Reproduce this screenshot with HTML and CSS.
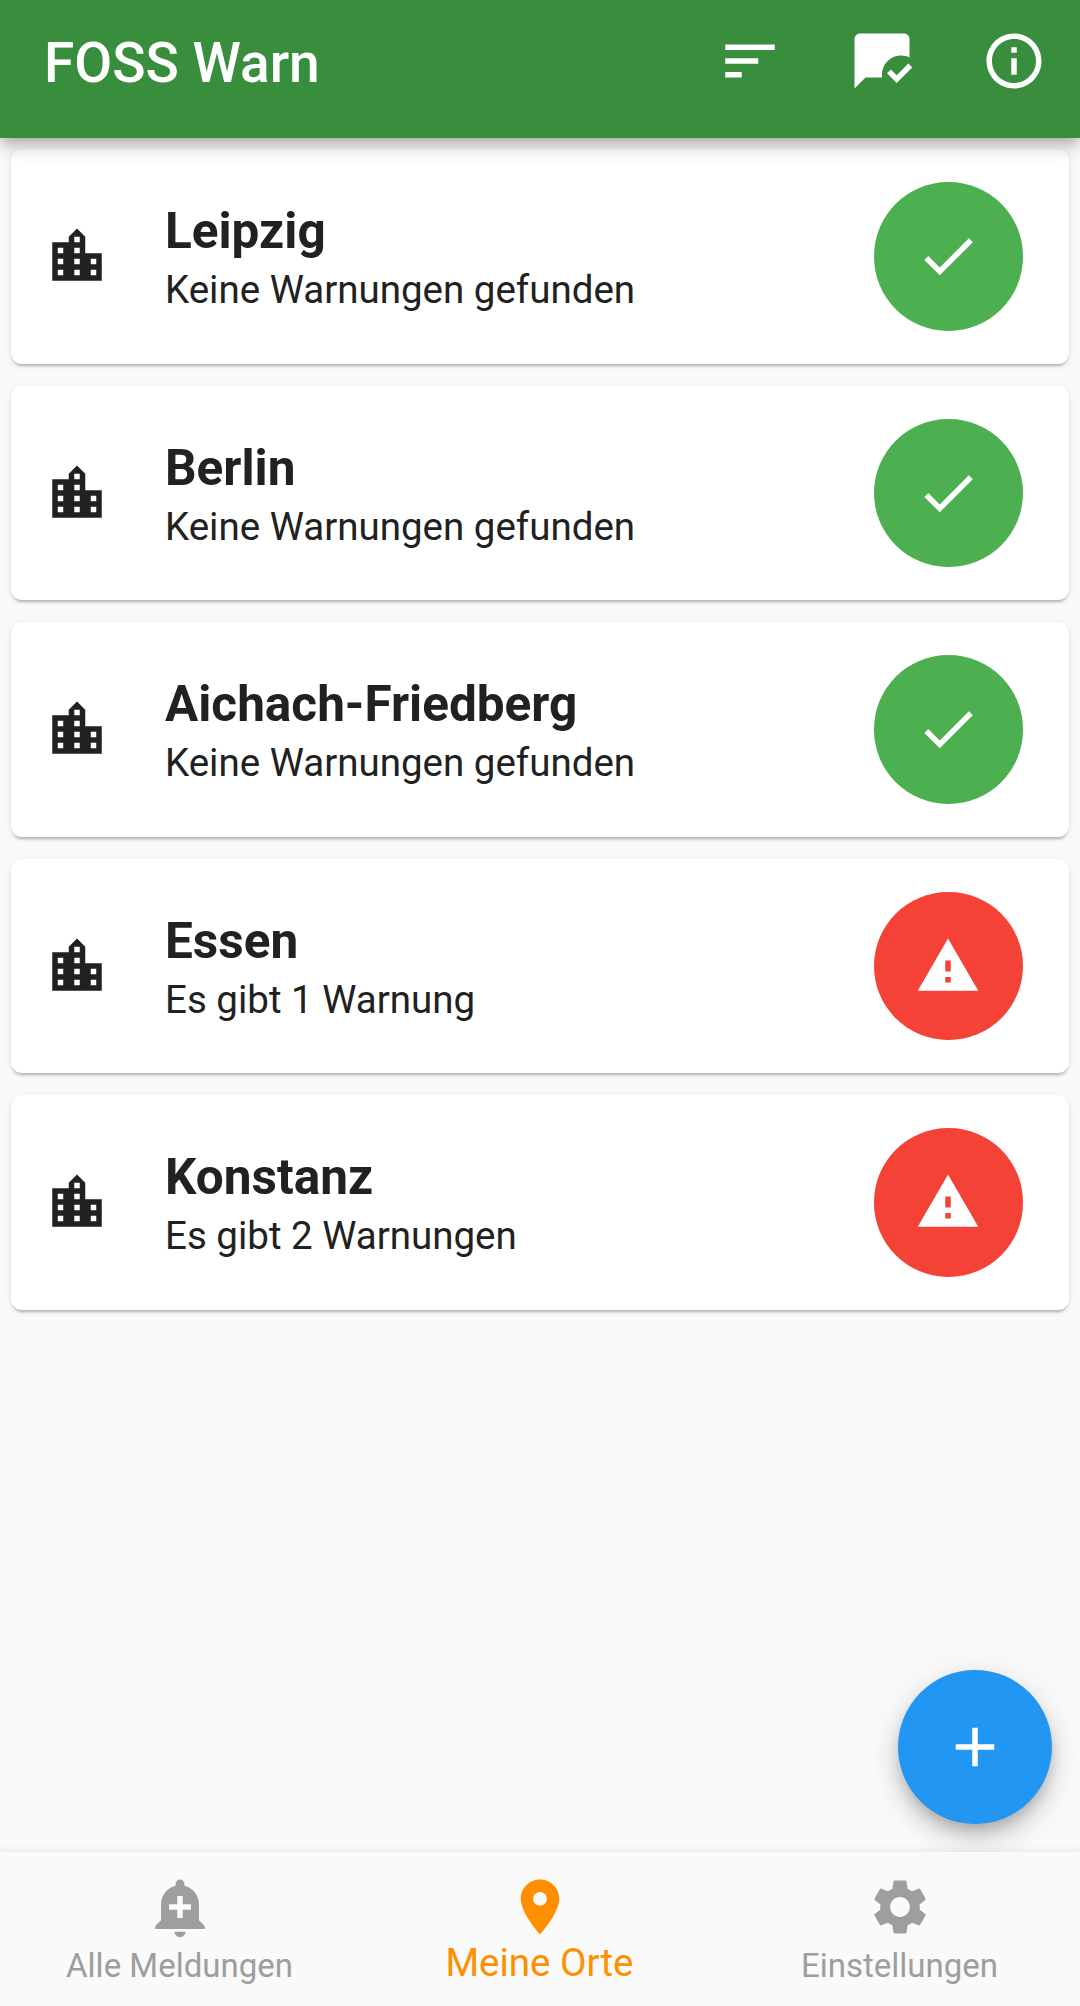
FILE: index.html
```
<!DOCTYPE html>
<html lang="de">
<head>
<meta charset="utf-8">
<title>FOSS Warn</title>
<link rel="stylesheet" href="styles.css">
</head>
<body>
<svg class="sprite" aria-hidden="true">
  <symbol id="city" viewBox="0 0 24 24"><path d="M15 11V5l-3-3-3 3v2H3v14h18V11h-6zm-8 8H5v-2h2v2zm0-4H5v-2h2v2zm0-4H5V9h2v2zm6 8h-2v-2h2v2zm0-4h-2v-2h2v2zm0-4h-2V9h2v2zm0-4h-2V5h2v2zm6 12h-2v-2h2v2zm0-4h-2v-2h2v2z"/></symbol>
  <symbol id="check" viewBox="0 0 24 24"><path d="M9 16.17 4.83 12l-1.42 1.41L9 19 21 7l-1.41-1.41z"/></symbol>
  <symbol id="warning" viewBox="0 0 24 24"><path d="M1 21h22L12 2 1 21zm12-3h-2v-2h2v2zm0-4h-2v-4h2v4z"/></symbol>
</svg>
<div class="app">
  <header class="app-bar">
    <h1 class="app-title">FOSS Warn</h1>
    <button class="action" aria-label="Sortieren"><svg class="icon" viewBox="0 0 24 24"><path d="M3 18h6v-2H3v2zM3 6v2h18V6H3zm0 7h12v-2H3v2z"/></svg></button>
    <button class="action" aria-label="Als gelesen markieren"><svg class="icon" viewBox="0 0 24 24"><path d="M12 18H6l-4 4V4c0-1.1.9-2 2-2h16c1.1 0 2 .9 2 2v6.68c-.91-.43-1.92-.68-3-.68-3.87 0-7 3.13-7 7v1zm11-3.66-1.41-1.41-4.24 4.24-2.12-2.12-1.41 1.41L17.34 20 23 14.34z"/></svg></button>
    <button class="action" aria-label="Info"><svg class="icon" viewBox="0 0 24 24"><path d="M11 7h2v2h-2zm0 4h2v6h-2zm1-9C6.48 2 2 6.48 2 12s4.48 10 10 10 10-4.48 10-10S17.52 2 12 2zm0 18c-4.41 0-8-3.59-8-8s3.59-8 8-8 8 3.59 8 8-3.59 8-8 8z"/></svg></button>
  </header>
  <main class="places">
    <article class="card"><svg class="icon"><use href="#city"/></svg><div class="info"><h2 class="name">Leipzig</h2><p class="status">Keine Warnungen gefunden</p></div><span class="badge"><svg class="icon"><use href="#check"/></svg></span></article>
    <article class="card"><svg class="icon"><use href="#city"/></svg><div class="info"><h2 class="name">Berlin</h2><p class="status">Keine Warnungen gefunden</p></div><span class="badge"><svg class="icon"><use href="#check"/></svg></span></article>
    <article class="card"><svg class="icon"><use href="#city"/></svg><div class="info"><h2 class="name">Aichach-Friedberg</h2><p class="status">Keine Warnungen gefunden</p></div><span class="badge"><svg class="icon"><use href="#check"/></svg></span></article>
    <article class="card"><svg class="icon"><use href="#city"/></svg><div class="info"><h2 class="name">Essen</h2><p class="status">Es gibt 1 Warnung</p></div><span class="badge alert"><svg class="icon"><use href="#warning"/></svg></span></article>
    <article class="card"><svg class="icon"><use href="#city"/></svg><div class="info"><h2 class="name">Konstanz</h2><p class="status">Es gibt 2 Warnungen</p></div><span class="badge alert"><svg class="icon"><use href="#warning"/></svg></span></article>
    <button class="fab" aria-label="Ort hinzufügen"><svg class="icon" viewBox="0 0 24 24"><path d="M19 13h-6v6h-2v-6H5v-2h6V5h2v6h6v2z"/></svg></button>
  </main>
  <nav class="bottom-nav">
    <a class="tab"><svg class="icon" viewBox="0 0 24 24"><path d="M10.01 21.01c0 1.1.89 1.99 1.99 1.99s1.99-.89 1.99-1.99h-3.98zm8.87-4.19V11c0-3.25-2.25-5.97-5.29-6.69v-.72C13.59 2.71 12.88 2 12 2s-1.59.71-1.59 1.59v.72C7.37 5.03 5.12 7.75 5.12 11v5.82L3 18.94V20h18v-1.06l-2.12-2.12zM16 13.01h-3v3h-2v-3H8V11h3V8h2v3h3v2.01z"/></svg><span class="label">Alle Meldungen</span></a>
    <a class="tab active"><svg class="icon" viewBox="0 0 24 24"><path d="M12 2C8.13 2 5 5.13 5 9c0 5.25 7 13 7 13s7-7.75 7-13c0-3.87-3.13-7-7-7zm0 9.5c-1.38 0-2.5-1.12-2.5-2.5s1.12-2.5 2.5-2.5 2.5 1.12 2.5 2.5-1.12 2.5-2.5 2.5z"/></svg><span class="label">Meine Orte</span></a>
    <a class="tab"><svg class="icon" viewBox="0 0 24 24"><path d="M19.14 12.94c.04-.3.06-.61.06-.94 0-.32-.02-.64-.07-.94l2.03-1.58c.18-.14.23-.41.12-.61l-1.92-3.32c-.12-.22-.37-.29-.59-.22l-2.39.96c-.5-.38-1.03-.7-1.62-.94l-.36-2.54c-.04-.24-.24-.41-.48-.41h-3.84c-.24 0-.43.17-.47.41l-.36 2.54c-.59.24-1.13.57-1.62.94l-2.39-.96c-.22-.08-.47 0-.59.22L2.74 8.87c-.12.21-.08.47.12.61l2.03 1.58c-.05.3-.09.63-.09.94s.02.64.07.94l-2.03 1.58c-.18.14-.23.41-.12.61l1.92 3.32c.12.22.37.29.59.22l2.39-.96c.5.38 1.03.7 1.62.94l.36 2.54c.05.24.24.41.48.41h3.84c.24 0 .44-.17.47-.41l.36-2.54c.59-.24 1.13-.56 1.62-.94l2.39.96c.22.08.47 0 .59-.22l1.92-3.32c.12-.22.07-.47-.12-.61l-2.01-1.58zM12 15.6c-1.98 0-3.6-1.62-3.6-3.6s1.62-3.6 3.6-3.6 3.6 1.62 3.6 3.6-1.62 3.6-3.6 3.6z"/></svg><span class="label">Einstellungen</span></a>
  </nav>
</div>
</body>
</html>
```
FILE: styles.css
```
* { box-sizing: border-box; }
body {
  margin: 0;
  background: #fafafa;
  color: #212121;
  font-family: Roboto, sans-serif;
}
h1, h2, p { margin: 0; }
button { border: 0; padding: 0; background: none; color: inherit; }
.sprite { display: none; }
.icon { display: block; width: 66px; height: 66px; fill: currentColor; flex: none; }
.app { display: flex; flex-direction: column; height: 2006px; overflow: hidden; }

.app-bar {
  position: relative;
  z-index: 1;
  display: flex;
  align-items: center;
  flex: none;
  height: 138px;
  padding: 0 0 16px 44px;
  background: #388e3c;
  color: #fff;
  box-shadow: 0 5px 11px -3px rgba(0,0,0,.2), 0 11px 14px rgba(0,0,0,.14), 0 3px 27px rgba(0,0,0,.06);
}
.app-title { flex: 1; padding-top: 3px; font-size: 55px; font-weight: 500; line-height: 66px; }
.action { display: flex; justify-content: center; width: 132px; }

.places {
  position: relative;
  flex: 1;
  display: flex;
  flex-direction: column;
  gap: 22px;
  padding: 11px;
}
.card {
  display: flex;
  align-items: center;
  height: 214.5px;
  padding: 0 46.5px 0 33px;
  border-radius: 11px;
  background: #fff;
  box-shadow: 0 5px 3px -3px rgba(0,0,0,.16), 0 2px 3px rgba(0,0,0,.12), 0 2px 8px rgba(0,0,0,.06);
}
.info { flex: 1; margin-left: 55px; padding-top: 9px; }
.name { font-size: 49.5px; font-weight: 700; line-height: 58px; }
.status { font-size: 38.5px; line-height: 59px; }
.badge {
  display: flex;
  align-items: center;
  justify-content: center;
  width: 148.5px;
  height: 148.5px;
  border-radius: 50%;
  background: #4caf50;
  color: #fff;
}
.alert { background: #f44336; }
.fab {
  position: absolute;
  right: 28px;
  bottom: 28px;
  display: flex;
  align-items: center;
  justify-content: center;
  width: 154px;
  height: 154px;
  border-radius: 50%;
  background: #2196f3;
  color: #fff;
  box-shadow: 0 8px 14px -3px rgba(0,0,0,.2), 0 16px 27px rgba(0,0,0,.14), 0 3px 40px rgba(0,0,0,.08);
}

.bottom-nav {
  position: relative;
  z-index: 1;
  display: grid;
  grid-template-columns: repeat(3, 1fr);
  flex: none;
  height: 154px;
  background: #fafafa;
  box-shadow: 0 0 10px rgba(0,0,0,.1);
}
.tab { display: flex; flex-direction: column; align-items: center; padding-top: 22px; color: #9e9e9e; }
.label { margin-right: 1px; font-size: 33px; line-height: 52px; white-space: nowrap; }
.active { color: #ff8f00; }
.active .label { font-size: 38.5px; line-height: 45px; }
```
